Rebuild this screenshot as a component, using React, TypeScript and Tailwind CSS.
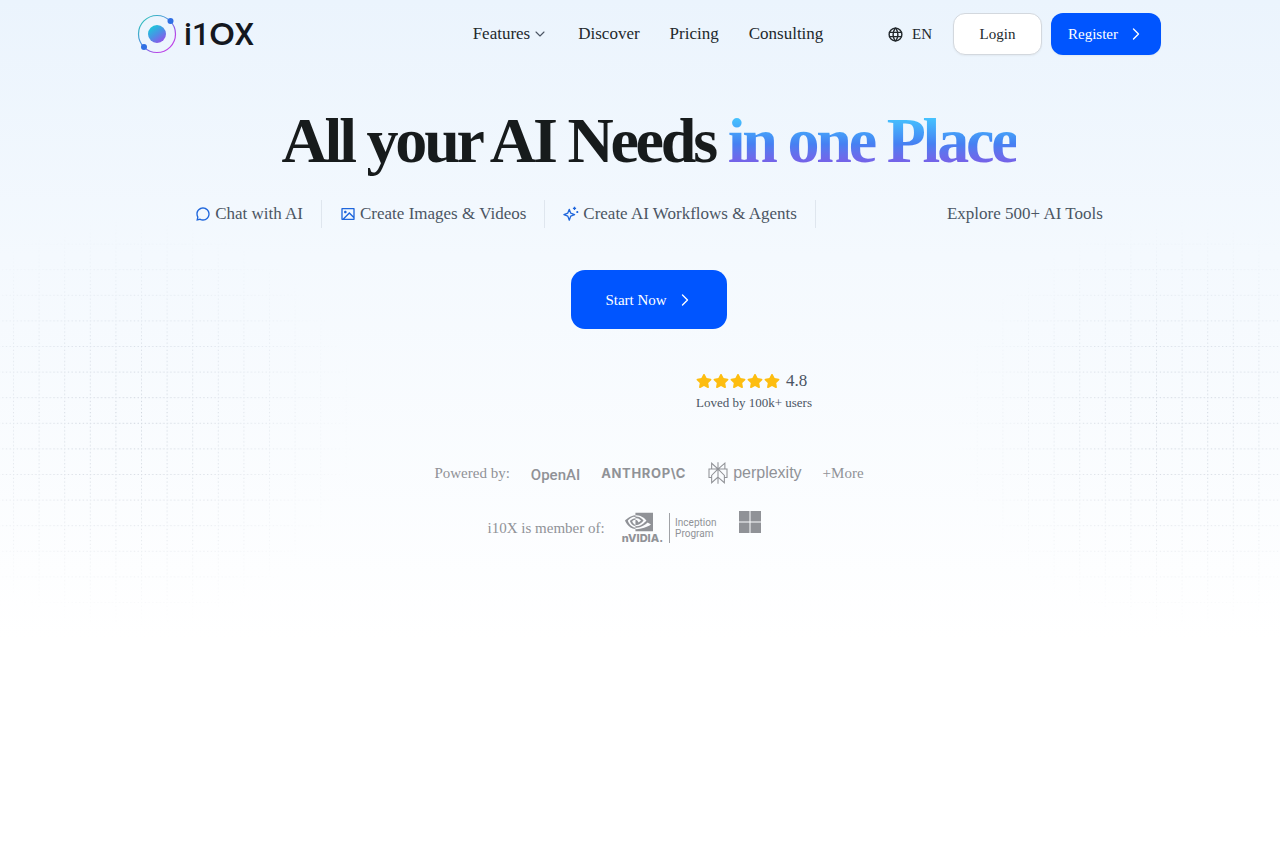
import type { ReactNode } from 'react';
import { ChevronDown, ChevronRight } from 'lucide-react';
import { FaStar } from 'react-icons/fa';
import { RiChat3Line, RiImageLine } from 'react-icons/ri';
import { SiNvidia, SiPerplexity } from 'react-icons/si';
import { TbWorld } from 'react-icons/tb';

const navLinks = ['Discover', 'Pricing', 'Consulting'];

function Logo() {
  return (
    <a href="#" aria-label="i10X home" className="flex items-center">
      <svg width="118" height="42" viewBox="0 0 118 42" fill="none">
        <defs>
          <linearGradient id="ring" x1="4" y1="4" x2="36" y2="38" gradientUnits="userSpaceOnUse">
            <stop stopColor="#2cc9b5" />
            <stop offset="0.5" stopColor="#5a86e8" />
            <stop offset="0.75" stopColor="#b04be6" />
            <stop offset="1" stopColor="#c93fe8" />
          </linearGradient>
          <linearGradient id="core" x1="14" y1="12" x2="27" y2="30" gradientUnits="userSpaceOnUse">
            <stop stopColor="#14d0d8" />
            <stop offset="0.5" stopColor="#4c8fe6" />
            <stop offset="1" stopColor="#a344ea" />
          </linearGradient>
        </defs>
        <circle cx="20" cy="21" r="18.5" stroke="url(#ring)" strokeWidth="1.2" />
        <circle cx="20" cy="21" r="9" fill="url(#core)" />
        <circle cx="33.5" cy="8" r="3" fill="#2f6fe4" />
        <circle cx="7" cy="34" r="3" fill="#2f6fe4" />
        <text x="47" y="32" fill="#14181f" fontFamily="Roboto, sans-serif" fontSize="31" fontWeight="500">
          i1<tspan fontFamily="Lato, sans-serif" fontWeight="700">O</tspan>X
        </text>
      </svg>
    </a>
  );
}

function SparkleIcon() {
  return (
    <svg width="16" height="16" viewBox="0 0 16 16" fill="none" stroke="currentColor" strokeWidth="1.3" strokeLinejoin="round">
      <path d="M6.3 3.3 7.7 7.1 11.6 8.6 7.7 10.1 6.3 14.2 4.8 10.1.9 8.6 4.8 7.1Z" />
      <path d="M11.5.8v3.2M9.9 2.4h3.2M14.3 5.1v2M13.3 6.1h2" />
    </svg>
  );
}

function DottedGrid({ id, offset }: { id: string; offset: number }) {
  return (
    <svg width="380" height="420" fill="none" aria-hidden="true">
      <defs>
        <pattern id={`${id}-lines`} x={offset} y="0" width="25.6" height="25.6" patternUnits="userSpaceOnUse">
          <path d="M0 .5H25.6M.5 0V25.6" stroke="#64748b" strokeWidth="1" strokeDasharray="1.3 2.4" opacity="0.3" />
        </pattern>
        <radialGradient id={`${id}-fade`}>
          <stop stopColor="#fff" />
          <stop offset="0.45" stopColor="#fff" stopOpacity="0.6" />
          <stop offset="1" stopColor="#fff" stopOpacity="0" />
        </radialGradient>
        <mask id={`${id}-mask`}>
          <ellipse cx={id === 'left' ? 130 : 280} cy="205" rx="230" ry="205" fill={`url(#${id}-fade)`} />
        </mask>
      </defs>
      <rect width="380" height="420" fill={`url(#${id}-lines)`} mask={`url(#${id}-mask)`} />
    </svg>
  );
}

function Feature({ icon, children }: { icon?: ReactNode; children: ReactNode }) {
  return (
    <li className="flex h-7 items-center gap-1 border-r border-[#dfe6ee] px-[18px] first:pl-0 last:border-r-0 last:pr-0">
      {icon && <span className="text-[#1f66dc]">{icon}</span>}
      {children}
    </li>
  );
}

export default function App() {
  return (
    <div className="relative min-h-screen bg-white font-['Liberation_Serif',serif] text-[#22282c]">
      <div className="absolute inset-x-0 top-0 flex h-[640px] items-start justify-between bg-linear-to-b from-[#ebf4fd] via-[#f4f9fe] via-40% to-white pt-[218px]">
        <DottedGrid id="left" offset={13} />
        <DottedGrid id="right" offset={0} />
      </div>

      <div className="relative pl-[18px]">
        <header className="mx-auto flex h-[68px] max-w-[1024px] items-center justify-between">
          <Logo />
          <nav className="flex items-center gap-[30px] pl-[154px] text-[17px] leading-6">
            <button type="button" className="flex items-center gap-[2px]">
              Features
              <ChevronDown className="h-4 w-4 text-[#4b5563]" strokeWidth={1.6} />
            </button>
            {navLinks.map((link) => (
              <a key={link} href="#">{link}</a>
            ))}
          </nav>
          <div className="flex items-center gap-[9px] text-[15px] leading-5">
            <button type="button" className="mr-3 flex items-center gap-2">
              <TbWorld className="h-[17px] w-[17px]" />
              EN
            </button>
            <button type="button" className="h-[42px] w-[89px] rounded-xl border border-[#d3d8de] bg-white shadow-xs">
              Login
            </button>
            <button type="button" className="flex h-[42px] w-[110px] items-center justify-center gap-2 rounded-xl bg-[#0055ff] pl-0.5 text-white shadow-xs">
              Register
              <ChevronRight className="h-5 w-5" strokeWidth={1.6} />
            </button>
          </div>
        </header>

        <main className="flex flex-col items-center">
          <h1 className="mt-[35px] text-[64px] leading-[76px] font-bold tracking-tighter text-[#171b1c]">
            All your AI Needs{' '}
            <span className="bg-linear-to-b from-[#45c8ff] from-15% via-[#4680f2] via-55% to-[#8055e4] to-90% bg-clip-text text-transparent">
              in one Place
            </span>
          </h1>

          <ul className="mt-[21px] flex items-center text-[17px] leading-6 text-[#4b5563]">
            <Feature icon={<RiChat3Line className="h-4 w-4" />}>Chat with AI</Feature>
            <Feature icon={<RiImageLine className="h-4 w-4" />}>Create Images &amp; Videos</Feature>
            <Feature icon={<SparkleIcon />}>Create AI Workflows &amp; Agents</Feature>
            <Feature>
              <span className="pl-[113px]">Explore 500+ AI Tools</span>
            </Feature>
          </ul>

          <button type="button" className="mt-[42px] flex h-[59px] w-[156px] items-center justify-center gap-2 rounded-[14px] bg-[#0055ff] pl-0.5 text-[15px] leading-5 text-white">
            Start Now
            <ChevronRight className="h-5 w-5" strokeWidth={1.6} />
          </button>

          <div className="mt-10 pl-[210px] text-[#4b5563]">
            <div className="flex items-center gap-[6px] text-[17px] leading-6">
              <div role="img" aria-label="5 stars" className="flex gap-px text-[#fdbd10]">
                {[1, 2, 3, 4, 5].map((n) => (
                  <FaStar key={n} className="h-4 w-4" />
                ))}
              </div>
              4.8
            </div>
            <p className="text-[13px] leading-5">Loved by 100k+ users</p>
          </div>

          <div className="mt-12 flex h-6 items-center gap-[21px] text-[15px] leading-5 text-[#909297]">
            <span>Powered by:</span>
            <span className="pt-1 font-['Roboto',sans-serif] font-medium">OpenAI</span>
            <span className="font-['Inter',sans-serif] text-[13px] font-bold tracking-wider">ANTHROP\C</span>
            <span className="flex items-center gap-1">
              <SiPerplexity className="h-6 w-[22px]" />
              <span className="font-['Liberation_Sans',sans-serif] text-[16px]">perplexity</span>
            </span>
            <span>+More</span>
          </div>

          <div className="mt-[25px] flex h-9 items-center pr-[49px] text-[15px] leading-5 text-[#909297]">
            <span className="mr-[17px]">i10X is member of:</span>
            <span className="flex flex-col items-start">
              <SiNvidia className="-my-1 ml-[3px] h-7 w-7" />
              <span className="font-['Inter',sans-serif] text-[11px] leading-3 font-extrabold">nVIDIA.</span>
            </span>
            <span className="ml-[6px] border-l border-[#a0a2a6] py-1 pl-[5px] font-['Roboto',sans-serif] text-[10px] leading-[11px]">
              Inception
              <br />
              Program
            </span>
            <svg className="mb-3 ml-[23px]" width="22" height="22" fill="currentColor" role="img" aria-label="Microsoft">
              <path d="M0 0h10.5v10.5H0zM11.5 0H22v10.5H11.5zM0 11.5h10.5V22H0zM11.5 11.5H22V22H11.5z" />
            </svg>
          </div>
        </main>
      </div>
    </div>
  );
}
